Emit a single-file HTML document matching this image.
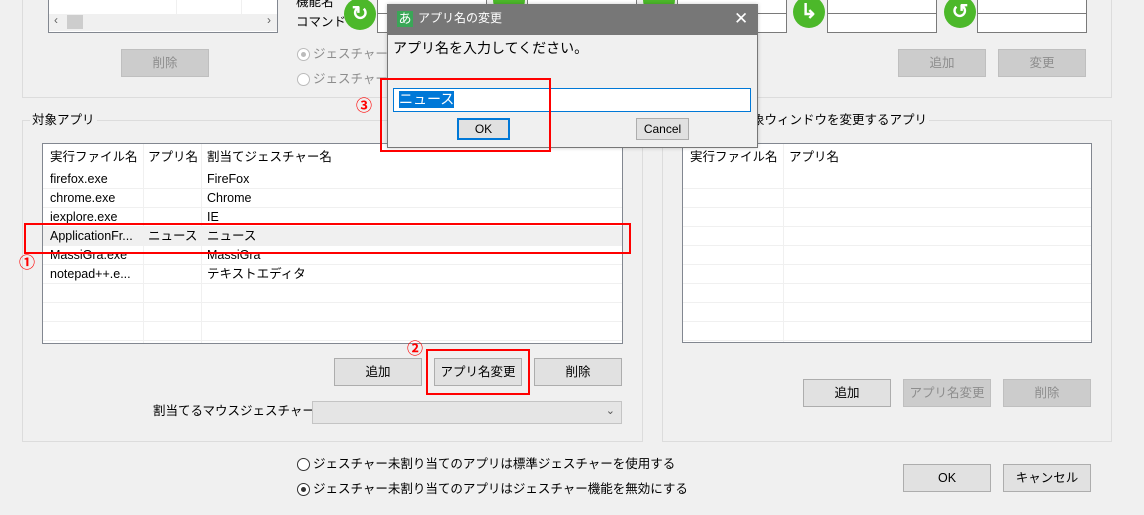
<!DOCTYPE html>
<html><head><meta charset="utf-8"><style>
*{box-sizing:border-box;margin:0;padding:0}
body{width:1144px;height:515px;background:#f0f0f0;position:relative;overflow:hidden;font-family:"Liberation Sans","Noto Sans CJK JP",sans-serif;font-size:12.5px;color:#000;line-height:1.3}
.a{position:absolute}
.btn{position:absolute;background:#e1e1e1;border:1px solid #adadad;text-align:center;font-size:12.5px;}
.dis{background:#cccccc;border-color:#bfbfbf;color:#8d8d8d}
.grp{position:absolute;border:1px solid #dcdcdc}
.lst{position:absolute;background:#fff;border:1px solid #828790;overflow:hidden}
.ic{position:absolute;width:32px;height:32px;border-radius:50%;background:#4cb82a;color:#fff;font-weight:bold;text-align:center;line-height:32px;font-size:20px}
.box{position:absolute;background:#fff;border:1px solid #7a7a7a}
.red{position:absolute;border:2px solid #f00}
.num{position:absolute;color:#f00;font-weight:bold;font-size:16px}
.row{position:absolute;left:0;right:0;height:19px;border-bottom:1px solid #f0f0f0;line-height:18px}
.row span{top:0 !important}
.radio{position:absolute;width:13px;height:13px;border:1px solid #333;border-radius:50%;background:#fff}
</style></head><body>
<!-- top area -->
<div class="grp" style="left:22px;top:-10px;width:1090px;height:108px"></div>
<div class="lst" style="left:48px;top:-5px;width:230px;height:38px">
<div class="a" style="left:0;top:18px;width:228px;height:17px;background:#f0f0f0"></div>
<div class="a" style="left:18px;top:19px;width:16px;height:14px;background:#cdcdcd"></div>
<div class="a" style="left:5px;top:17px;font-size:12px;color:#606060">&lsaquo;</div>
<div class="a" style="left:218px;top:17px;font-size:12px;color:#606060">&rsaquo;</div>
<div class="a" style="left:127px;top:0;width:1px;height:18px;background:#f0f0f0"></div>
<div class="a" style="left:192px;top:0;width:1px;height:18px;background:#f0f0f0"></div>
</div>
<div class="btn dis" style="left:121px;top:49px;width:88px;height:28px;line-height:26px">削除</div>
<div class="a" style="left:296px;top:-6px">機能名</div>
<div class="a" style="left:296px;top:14px">コマンド</div>
<div class="ic" style="left:344px;top:-2px">↻</div>
<div class="box" style="left:377px;top:-5px;width:110px;height:19px"></div><div class="box" style="left:377px;top:13px;width:110px;height:20px"></div>
<div class="ic" style="left:493px;top:-16px"></div>
<div class="box" style="left:527px;top:-5px;width:110px;height:19px"></div><div class="box" style="left:527px;top:13px;width:110px;height:20px"></div>
<div class="ic" style="left:643px;top:-16px"></div>
<div class="box" style="left:677px;top:-5px;width:110px;height:19px"></div><div class="box" style="left:677px;top:13px;width:110px;height:20px"></div>
<div class="ic" style="left:793px;top:-4px">↳</div>
<div class="box" style="left:827px;top:-5px;width:110px;height:19px"></div><div class="box" style="left:827px;top:13px;width:110px;height:20px"></div>
<div class="ic" style="left:944px;top:-4px">↺</div>
<div class="box" style="left:977px;top:-5px;width:110px;height:19px"></div><div class="box" style="left:977px;top:13px;width:110px;height:20px"></div>
<div class="radio" style="left:297px;top:48px;border-color:#bbb"><div class="a" style="left:3px;top:3px;width:5px;height:5px;border-radius:50%;background:#bbb"></div></div>
<div class="a" style="left:313px;top:46px;color:#8d8d8d">ジェスチャーメ</div>
<div class="radio" style="left:297px;top:73px;border-color:#bbb"></div>
<div class="a" style="left:313px;top:71px;color:#8d8d8d">ジェスチャーデ</div>
<div class="btn dis" style="left:898px;top:49px;width:88px;height:28px;line-height:26px">追加</div>
<div class="btn dis" style="left:998px;top:49px;width:88px;height:28px;line-height:26px">変更</div>

<!-- left group -->
<div class="grp" style="left:22px;top:120px;width:621px;height:322px"></div>
<div class="a" style="left:30px;top:112px;background:#f0f0f0;padding:0 2px">対象アプリ</div>
<div class="lst" style="left:42px;top:143px;width:581px;height:201px">
<div class="a" style="left:100px;top:0;width:1px;height:200px;background:#f0f0f0"></div>
<div class="a" style="left:158px;top:0;width:1px;height:200px;background:#f0f0f0"></div>
<div class="a" style="left:7px;top:5px">実行ファイル名</div>
<div class="a" style="left:105px;top:5px">アプリ名</div>
<div class="a" style="left:164px;top:5px">割当てジェスチャー名</div>
<div class="row" style="top:26px"><span class="a" style="left:7px">firefox.exe</span><span class="a" style="left:164px">FireFox</span></div>
<div class="row" style="top:45px"><span class="a" style="left:7px">chrome.exe</span><span class="a" style="left:164px">Chrome</span></div>
<div class="row" style="top:64px"><span class="a" style="left:7px">iexplore.exe</span><span class="a" style="left:164px">IE</span></div>
<div class="row" style="top:83px;background:#f0f0f0"><span class="a" style="left:7px">ApplicationFr...</span><span class="a" style="left:105px">ニュース</span><span class="a" style="left:164px">ニュース</span></div>
<div class="row" style="top:102px"><span class="a" style="left:7px">MassiGra.exe</span><span class="a" style="left:164px">MassiGra</span></div>
<div class="row" style="top:121px"><span class="a" style="left:7px">notepad++.e...</span><span class="a" style="left:164px">テキストエディタ</span></div>
<div class="row" style="top:140px"></div><div class="row" style="top:159px"></div><div class="row" style="top:178px"></div>
</div>
<div class="btn" style="left:334px;top:358px;width:88px;height:28px;line-height:26px">追加</div>
<div class="btn" style="left:434px;top:358px;width:88px;height:28px;line-height:26px">アプリ名変更</div>
<div class="btn" style="left:534px;top:358px;width:88px;height:28px;line-height:26px">削除</div>
<div class="a" style="left:153px;top:403px">割当てるマウスジェスチャー</div>
<div class="a" style="left:312px;top:401px;width:310px;height:23px;background:#e5e5e5;border:1px solid #c4c4c4"><span class="a" style="right:6px;top:2px;font-size:11px;color:#555">&#8964;</span></div>

<!-- right group -->
<div class="grp" style="left:662px;top:120px;width:450px;height:322px"></div>
<div class="a" style="left:750px;top:112px;background:#f0f0f0;padding:0 2px">象ウィンドウを変更するアプリ</div>
<div class="lst" style="left:682px;top:143px;width:410px;height:200px">
<div class="a" style="left:100px;top:0;width:1px;height:200px;background:#f0f0f0"></div>
<div class="a" style="left:7px;top:5px">実行ファイル名</div>
<div class="a" style="left:106px;top:5px">アプリ名</div>
<div class="row" style="top:26px"></div><div class="row" style="top:45px"></div><div class="row" style="top:64px"></div><div class="row" style="top:83px"></div><div class="row" style="top:102px"></div><div class="row" style="top:121px"></div><div class="row" style="top:140px"></div><div class="row" style="top:159px"></div><div class="row" style="top:178px"></div>
</div>
<div class="btn" style="left:803px;top:379px;width:88px;height:28px;line-height:26px">追加</div>
<div class="btn dis" style="left:903px;top:379px;width:88px;height:28px;line-height:26px">アプリ名変更</div>
<div class="btn dis" style="left:1003px;top:379px;width:88px;height:28px;line-height:26px">削除</div>

<!-- bottom -->
<div class="radio" style="left:297px;top:458px"></div>
<div class="a" style="left:313px;top:456px">ジェスチャー未割り当てのアプリは標準ジェスチャーを使用する</div>
<div class="radio" style="left:297px;top:483px"><div class="a" style="left:3px;top:3px;width:5px;height:5px;border-radius:50%;background:#333"></div></div>
<div class="a" style="left:313px;top:481px">ジェスチャー未割り当てのアプリはジェスチャー機能を無効にする</div>
<div class="btn" style="left:903px;top:464px;width:88px;height:28px;line-height:26px">OK</div>
<div class="btn" style="left:1003px;top:464px;width:88px;height:28px;line-height:26px">キャンセル</div>

<!-- dialog -->
<div class="a" style="left:387px;top:4px;width:371px;height:144px;background:#f0f0f0;border:1px solid #777;box-shadow:0 0 4px rgba(0,0,0,.2)">
<div class="a" style="left:-1px;top:-1px;width:371px;height:31px;background:#777"></div>
<div class="a" style="left:9px;top:6px;width:16px;height:16px;background:#3aa757;color:#fff;font-size:13px;line-height:16px;text-align:center">あ</div>
<div class="a" style="left:30px;top:6px;color:#fff;font-size:12px">アプリ名の変更</div>
<div class="a" style="left:346px;top:3px;color:#fff;font-size:17px">✕</div>
<div class="a" style="left:5px;top:34px;font-size:14px">アプリ名を入力してください。</div>
<div class="a" style="left:5px;top:83px;width:358px;height:24px;background:#fff;border:1px solid #0078d7"><span class="a" style="left:5px;top:2px;background:#0078d7;color:#fff;font-size:14px;line-height:17px">ニュース</span></div>
<div class="a" style="left:69px;top:113px;width:53px;height:22px;background:#e1e1e1;border:2px solid #0078d7;text-align:center;line-height:18px;font-size:12px">OK</div>
<div class="a" style="left:248px;top:113px;width:53px;height:22px;background:#e1e1e1;border:1px solid #adadad;text-align:center;line-height:20px;font-size:12px">Cancel</div>
</div>

<!-- annotations -->
<div class="red" style="left:380px;top:78px;width:171px;height:74px"></div>
<div class="num" style="left:356px;top:97px">③</div>
<div class="red" style="left:24px;top:223px;width:607px;height:31px"></div>
<div class="num" style="left:19px;top:254px">①</div>
<div class="red" style="left:426px;top:349px;width:104px;height:46px"></div>
<div class="num" style="left:407px;top:340px">②</div>
</body></html>
